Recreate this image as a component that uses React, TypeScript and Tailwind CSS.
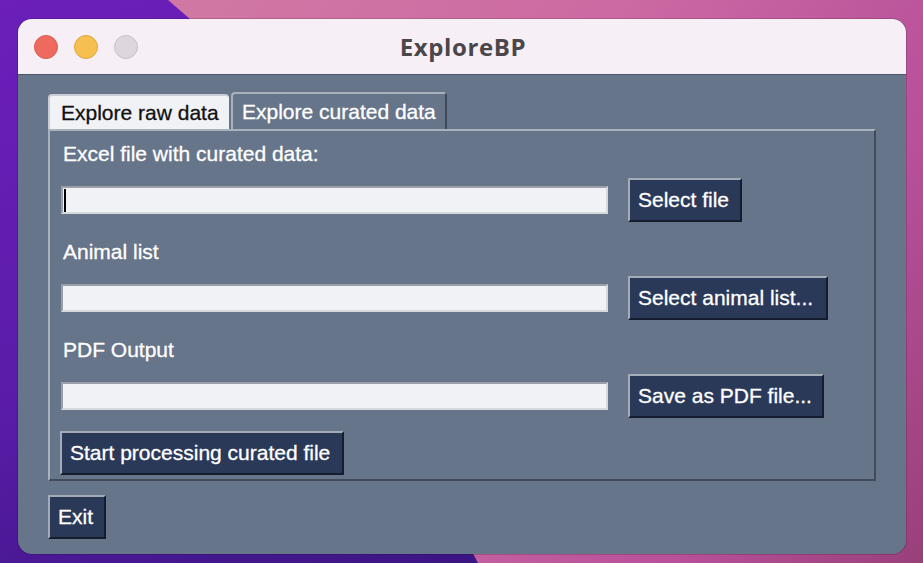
import React from "react";

const font = { fontFamily: '"Liberation Sans", Arial, sans-serif' };

function Btn({ w, children }: { w: string; children: React.ReactNode }) {
  return (
    <div
      className={`${w} h-[44px] flex items-center pl-[8px] bg-[#2b3959] border-2 border-t-[#a3abb9] border-l-[#a3abb9] border-b-[#151c2d] border-r-[#151c2d] text-white text-[21px] whitespace-nowrap [-webkit-text-stroke:0.3px_white]`}
    >
      {children}
    </div>
  );
}

function Field({ caret }: { caret?: boolean }) {
  return (
    <div className="w-[547px] h-[28px] bg-[#f1f2f6] border-2 border-t-[#9b9fa7] border-l-[#9b9fa7] border-b-[#d6d8dc] border-r-[#d6d8dc] flex items-center pl-[1px]">
      {caret && <div className="w-[2px] h-[23px] bg-black" />}
    </div>
  );
}

function Section({ label, caret, btn, w, gap }: { label: string; caret?: boolean; btn: string; w: string; gap?: boolean }) {
  return (
    <div className={gap ? "mt-[18px]" : ""}>
      <div className="h-[24px] flex items-center pl-[3px] text-white text-[21px] [-webkit-text-stroke:0.3px_white]">{label}</div>
      <div className="mt-[12px] h-[44px] flex items-center">
        <div className="ml-[1px]">
          <Field caret={caret} />
        </div>
        <div className="ml-[20px]">
          <Btn w={w}>{btn}</Btn>
        </div>
      </div>
    </div>
  );
}

export default function App() {
  return (
    <div
      className="relative w-[923px] h-[563px] overflow-hidden bg-[linear-gradient(160deg,#6c1fba_0%,#5a1ca8_45%,#2c1270_100%)]"
      style={font}
    >
      <div className="absolute inset-0 [clip-path:polygon(168px_0,923px_0,923px_563px,478px_563px,190px_19px)] bg-[linear-gradient(120deg,#d27ea4_0%,#cc6aa3_50%,#b8509a_80%,#98407a_100%)]" />
      <div className="absolute left-[18px] top-[19px] w-[888px] h-[535px] rounded-[14px] overflow-hidden flex flex-col bg-[#67758a] shadow-[0_0_0_1px_rgba(0,0,0,0.15)]">
        <div className="h-[56px] bg-[#f6eff6] border-b border-[#4e5666] flex items-center relative">
          <div className="flex gap-[16px] pl-[16px]">
            <div className="w-[24px] h-[24px] rounded-full bg-[#ee6a5f] border border-[#d85a50]" />
            <div className="w-[24px] h-[24px] rounded-full bg-[#f5c04f] border border-[#dca83e]" />
            <div className="w-[24px] h-[24px] rounded-full bg-[#ddd7dd] border border-[#c8c2c8]" />
          </div>
          <div className="absolute left-0 right-0 text-center text-[24px] font-bold text-[#4a464a] tracking-[0.6px] pl-[2px]" style={{ fontFamily: '"Open Sans", Arial, sans-serif' }}>
            ExploreBP
          </div>
        </div>
        <div className="flex-1 pt-[17px] pl-[30px] pr-[30px]">
          <div className="flex items-end h-[37px]">
            <div className="w-[181px] h-[35px] bg-[#f1f2f6] rounded-t-[4px] border-t-2 border-l-2 border-[#c9cdd5] flex items-center pl-[11px] text-[21px] text-[#111] [-webkit-text-stroke:0.3px_#111]">
              Explore raw data
            </div>
            <div className="ml-[2px] w-[216px] h-[37px] rounded-t-[4px] border-t-2 border-l-2 border-r-2 border-t-[#a9b1bd] border-l-[#a9b1bd] border-r-[#3f4858] flex items-center pl-[9px] text-[21px] text-white [-webkit-text-stroke:0.3px_white]">
              Explore curated data
            </div>
          </div>
          <div className="w-[828px] h-[352px] border-2 border-t-[#a9b1be] border-l-[#a9b1be] border-b-[#434b5a] border-r-[#434b5a] pt-[11px] pl-[10px]">
            <Section label="Excel file with curated data:" caret btn="Select file" w="w-[114px]" />
            <Section label="Animal list" btn="Select animal list..." w="w-[200px]" gap />
            <Section label="PDF Output" btn="Save as PDF file..." w="w-[196px]" gap />
            <div className="mt-[13px]">
              <Btn w="w-[284px]">Start processing curated file</Btn>
            </div>
          </div>
          <div className="mt-[14px]">
            <Btn w="w-[58px]">Exit</Btn>
          </div>
        </div>
      </div>
    </div>
  );
}
